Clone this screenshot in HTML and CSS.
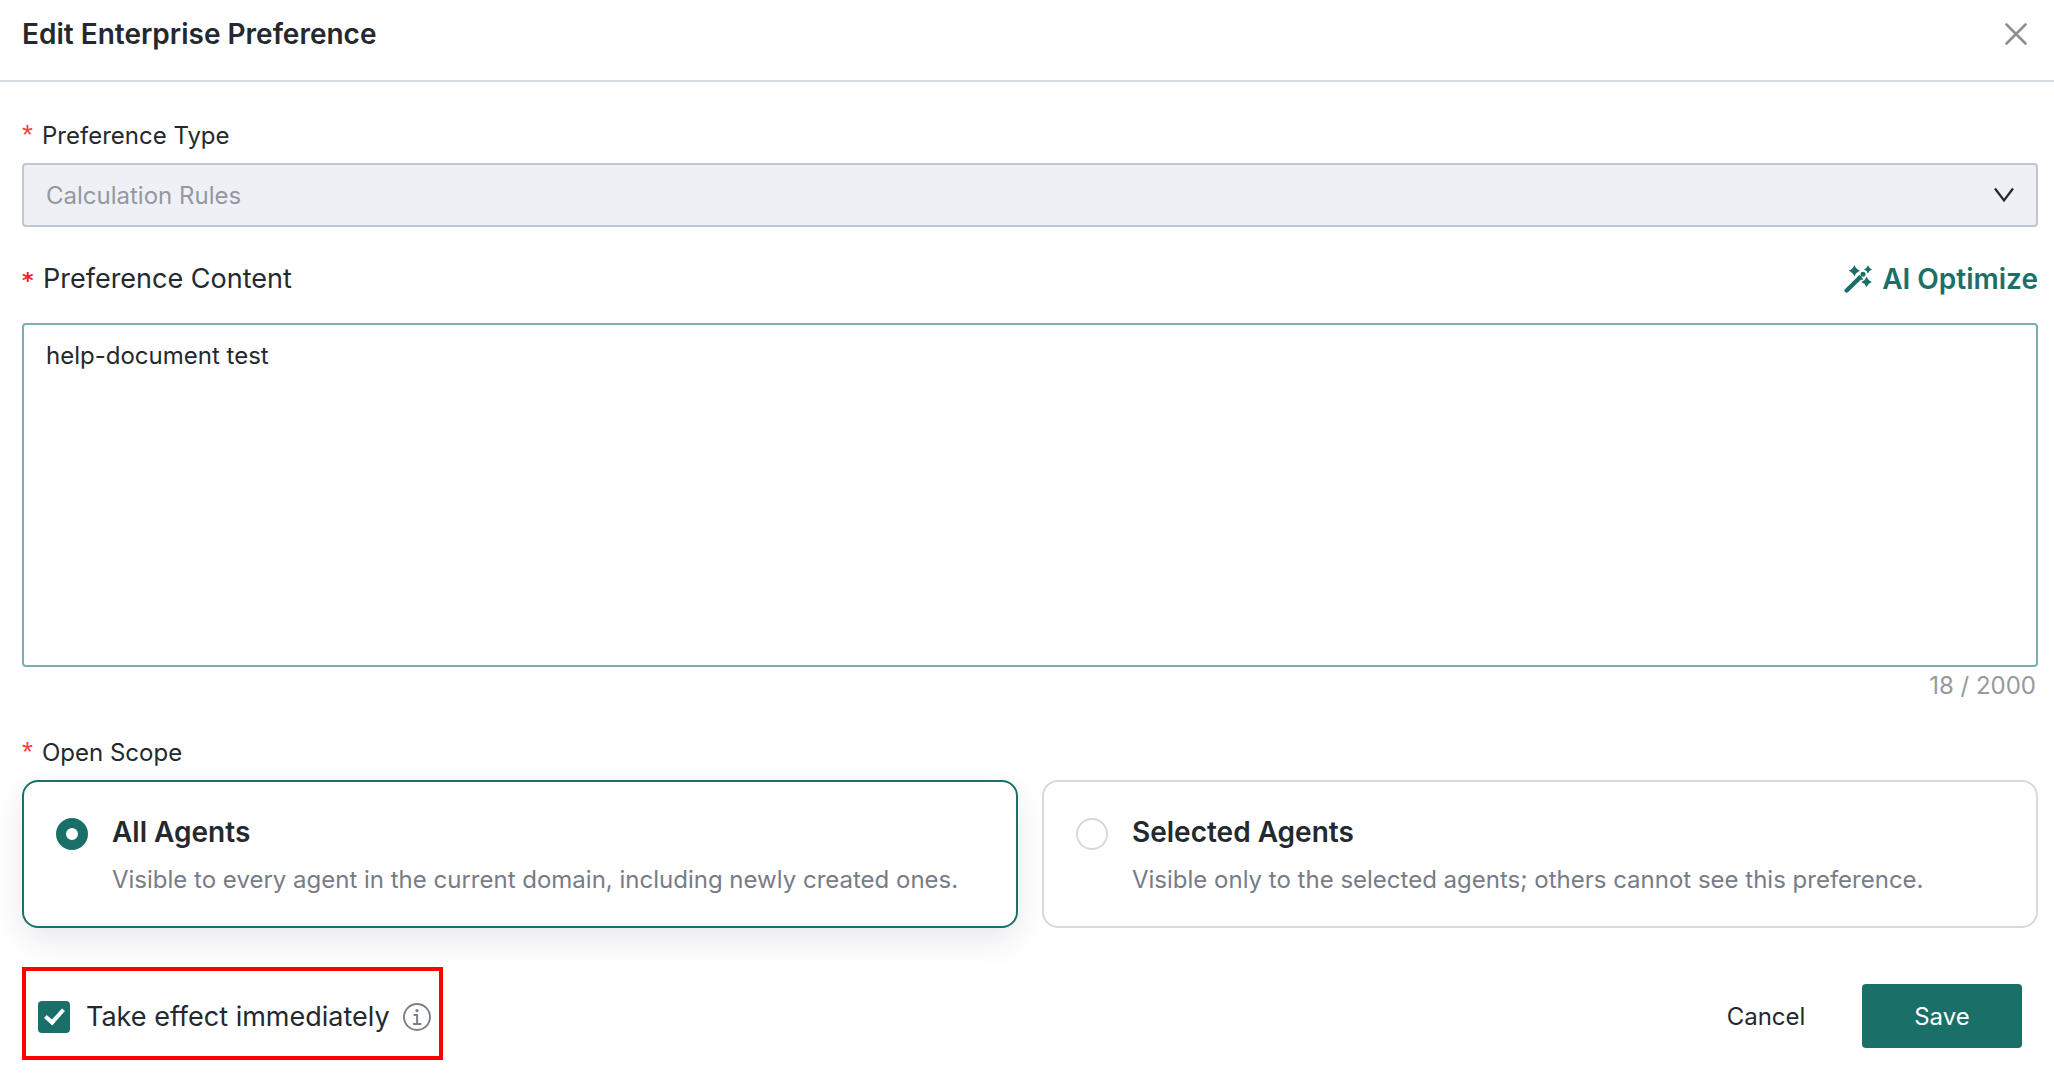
FILE: index.html
```html
<!DOCTYPE html>
<html lang="en">

<head>
    <meta charset="utf-8">
    <title>Edit Enterprise Preference</title>
    <link rel="stylesheet" href="styles.css">
</head>

<body>
    <header class="header">
        <h1 class="title">Edit Enterprise Preference</h1>
        <button class="close" type="button" aria-label="Close">
            <svg width="24" height="24" viewBox="0 0 24 24"><path d="M2.5 2.5l19 19M21.5 2.5l-19 19" fill="none" stroke="#8c8f93" stroke-width="2.6" stroke-linecap="round"/></svg>
        </button>
    </header>

    <form class="form">
        <div class="field">
            <label class="label" for="type"><span class="star">*</span>Preference Type</label>
            <div class="select-box">
                <select id="type" class="select" disabled>
                    <option>Calculation Rules</option>
                </select>
                <svg class="arrow" width="20" height="16" viewBox="0 0 20 16"><path d="M1 1.5l9 12 9-12" fill="none" stroke="#23292e" stroke-width="2.2"/></svg>
            </div>
        </div>

        <div class="field field-content">
            <div class="label-row">
                <label class="label label-big" for="content"><span class="star star-bold">*</span>Preference Content</label>
                <button class="optimize" type="button">
                    <svg width="28" height="28" viewBox="0 0 28 28" fill="#1a7069">
                        <path d="M2.7 25.5L15.6 12.9" stroke="#1a7069" stroke-width="4.4" stroke-linecap="round"/>
                        <path d="M14.6 10.6l4 4" stroke="#1a7069" stroke-width="1.6"/>
                        <circle cx="19" cy="9.3" r="2.5"/>
                        <path d="M10.4 0Q12 4.2 16 5.7Q12 7.2 10.4 11.4Q8.8 7.2 4.8 5.7Q8.8 4.2 10.4 0z"/>
                        <path d="M24 0.2Q25.1 3.3 28 4.4Q25.1 5.5 24 8.6Q22.9 5.5 20 4.4Q22.9 3.3 24 0.2z"/>
                        <path d="M22.6 11.8Q24 15.6 27.8 16.9Q24 18.2 22.6 22Q21.2 18.2 17.4 16.9Q21.2 15.6 22.6 11.8z"/>
                    </svg>
                    AI Optimize
                </button>
            </div>
            <textarea id="content" class="textarea" maxlength="2000">help-document test</textarea>
            <div class="count">18 / 2000</div>
        </div>

        <div class="field" role="radiogroup" aria-labelledby="scope-label">
            <div class="label" id="scope-label"><span class="star">*</span>Open Scope</div>
            <div class="cards">
                <label class="card card-active">
                    <input class="radio" type="radio" name="scope" checked>
                    <span class="card-text">
                        <span class="card-title">All Agents</span>
                        <span class="card-desc">Visible to every agent in the current domain, including newly created ones.</span>
                    </span>
                </label>
                <label class="card">
                    <input class="radio" type="radio" name="scope">
                    <span class="card-text">
                        <span class="card-title">Selected Agents</span>
                        <span class="card-desc">Visible only to the selected agents; others cannot see this preference.</span>
                    </span>
                </label>
            </div>
        </div>

        <footer class="footer">
            <div class="effect">
                <input id="effect" class="checkbox" type="checkbox" checked>
                <label class="effect-label" for="effect">Take effect immediately</label>
                <svg width="28" height="28" viewBox="0 0 28 28">
                    <circle cx="14" cy="14" r="13" fill="none" stroke="#7b7f88" stroke-width="1.9"/>
                    <circle cx="14" cy="7.6" r="1.6" fill="#7b7f88"/>
                    <path d="M10.6 12h3.5v9M10 21h8.4" fill="none" stroke="#7b7f88" stroke-width="2"/>
                </svg>
            </div>
            <div class="actions">
                <button class="btn" type="button">Cancel</button>
                <button class="btn btn-primary" type="submit">Save</button>
            </div>
        </footer>
    </form>
</body>

</html>
```
FILE: styles.css
```css
*, *::before {
    box-sizing: border-box;
}

body {
    margin: 0;
    background: #fff;
    color: #23292e;
    font-family: Inter, sans-serif;
    font-size: 24px;
}

button, select, textarea {
    font: inherit;
    color: inherit;
}

button {
    border: 0;
    padding: 0;
    background: none;
    cursor: pointer;
}

svg {
    display: block;
    flex: none;
}

.header {
    display: flex;
    justify-content: space-between;
    align-items: center;
    padding: 12px 26px 24px 22px;
    border-bottom: 2px solid #d5dae0;
}

.title {
    margin: 0;
    font-size: 28px;
    font-weight: 600;
    line-height: 44px;
}

.form {
    padding: 35px 16px 28px 22px;
}

.field {
    margin-bottom: 32px;
}

.field-content {
    margin-bottom: 29px;
}

.label {
    display: block;
    margin-bottom: 8px;
    line-height: 38px;
}

.label-row {
    display: flex;
    justify-content: space-between;
    align-items: center;
    margin-bottom: 24px;
}

.label-big {
    margin: 0;
    font-size: 27px;
    line-height: 40px;
}

.star {
    display: inline-block;
    width: 20px;
    color: #f5403b;
    font-family: "Liberation Sans", sans-serif;
    font-size: 28px;
    line-height: 1;
}

.star-bold {
    width: 21px;
    color: #f5222d;
    font-family: "DejaVu Sans", sans-serif;
    font-weight: 700;
    font-size: 22px;
}

.select-box {
    display: grid;
    align-items: center;
}

.select, .arrow {
    grid-area: 1 / 1;
}

.select {
    appearance: none;
    width: 100%;
    height: 64px;
    padding: 0 22px;
    border: 2px solid #c1c7cf;
    border-radius: 4px;
    background: #eff0f6;
    color: #92999f;
    opacity: 1;
}

.arrow {
    justify-self: end;
    margin-right: 24px;
    pointer-events: none;
}

.optimize {
    display: flex;
    align-items: center;
    gap: 10px;
    color: #1a7069;
    font-size: 28px;
    font-weight: 600;
    line-height: 40px;
}

.textarea {
    display: block;
    width: 100%;
    height: 344px;
    padding: 13px 22px;
    border: 2px solid #7ab0af;
    border-radius: 4px;
    outline: none;
    resize: none;
    line-height: 36px;
}

.count {
    padding-right: 2px;
    color: #97999c;
    line-height: 38px;
    text-align: right;
}

.cards {
    display: grid;
    grid-template-columns: 1fr 1fr;
    gap: 24px;
}

.card {
    display: flex;
    gap: 24px;
    padding: 28px 32px;
    border: 2px solid #d5dae0;
    border-radius: 16px;
    cursor: pointer;
}

.card-active {
    border-color: #1a7069;
    box-shadow: 0 12px 32px rgba(31, 41, 65, .1);
}

.card-text {
    display: flex;
    flex-direction: column;
    gap: 8px;
}

.card-title {
    font-size: 28px;
    font-weight: 600;
    line-height: 44px;
}

.card-desc {
    color: #777c87;
    line-height: 36px;
}

.radio, .checkbox {
    appearance: none;
    flex: none;
    width: 32px;
    height: 32px;
    margin: 0;
}

.radio {
    margin-top: 8px;
    border: 2px solid #d5dae0;
    border-radius: 50%;
}

.radio:checked {
    border: 10px solid #1a7069;
}

.checkbox {
    border-radius: 4px;
    background: #1a7069;
}

.checkbox::before {
    content: "";
    display: block;
    width: 11px;
    height: 19px;
    margin: 4px 0 0 11px;
    border: solid #fff;
    border-width: 0 4px 4px 0;
    transform: rotate(42deg);
}

.footer {
    display: flex;
    justify-content: space-between;
    align-items: flex-end;
    margin-top: 39px;
}

/* highlighted option */
.effect {
    display: flex;
    align-items: center;
    padding: 26px 8px 19px 12px;
    border: 4px solid #f00;
}

.effect-label {
    margin: 0 13px 0 16px;
    font-size: 27px;
    line-height: 40px;
}

.actions {
    display: flex;
    gap: 16px;
    padding: 0 16px 12px 0;
}

.btn {
    min-width: 160px;
    height: 64px;
    border-radius: 4px;
}

.btn-primary {
    background: #1a7069;
    color: #fff;
}
```
